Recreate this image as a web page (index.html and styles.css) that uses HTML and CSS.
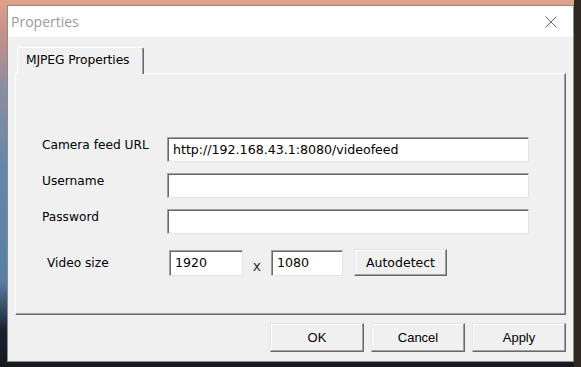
FILE: index.html
```html
<!DOCTYPE html>
<html lang="en">
<head>
    <meta charset="UTF-8">
    <title>Properties</title>
    <link rel="stylesheet" href="styles.css">
</head>
<body>
    <div class="window">
        <div class="titlebar">
            <span class="title">Properties</span>
            <svg class="close" width="12" height="12" viewBox="0 0 12 12">
                <path d="M0.5 0.5 L11.5 11.5 M11.5 0.5 L0.5 11.5" stroke="#6a6a6a" stroke-width="1" fill="none"/>
            </svg>
        </div>
        <div class="content">
            <div class="tabs">
                <div class="tab">MJPEG Properties</div>
            </div>
            <div class="panel">
                <div class="fields">
                    <label>Camera feed URL</label>
                    <div class="edit">http://192.168.43.1:8080/videofeed</div>
                    <label>Username</label>
                    <div class="edit"></div>
                    <label>Password</label>
                    <div class="edit"></div>
                </div>
                <div class="size-row">
                    <label>Video size</label>
                    <div class="edit small w">1920</div>
                    <span class="times">x</span>
                    <div class="edit small h">1080</div>
                    <button class="btn auto">Autodetect</button>
                </div>
            </div>
            <div class="actions">
                <button class="btn">OK</button>
                <button class="btn">Cancel</button>
                <button class="btn">Apply</button>
            </div>
        </div>
    </div>
</body>
</html>
```

FILE: styles.css
```css
*{
    margin: 0;
    padding: 0;
    box-sizing: border-box;
}
body{
    width: 581px;
    height: 367px;
    overflow: hidden;
    padding: 5px 0 0 7px;
    background:
        linear-gradient(to right, transparent 574px, #2e2822 574px),
        linear-gradient(180deg, #e0a28a 0, #c49088 35px, #8a8ea2 90px, #6486aa 170px, #5a80a8 280px, #1c2230 330px, #16181e 367px);
    font-family: "DejaVu Sans", Tahoma, sans-serif;
    font-size: 12px;
    color: #000;
}
.window{
    width: 567px;
    height: 357px;
    border: 1px solid #8c8c8c;
    background: #f0f0f0;
    display: flex;
    flex-direction: column;
}
.titlebar{
    height: 31px;
    background: #fff;
    display: flex;
    align-items: center;
    justify-content: space-between;
    padding: 0 16px 0 3px;
}
.title{
    font-family: "Open Sans", "Noto Sans", sans-serif;
    font-size: 14px;
    color: #9a9a9a;
}
.close{
    display: block;
}
.content{
    flex: 1;
    padding: 10px 7px 0 7px;
    display: flex;
    flex-direction: column;
}
.tabs{
    display: flex;
    padding-left: 2px;
    height: 26px;
}
.tab{
    position: relative;
    z-index: 1;
    height: 27px;
    width: 127px;
    padding: 5px 0 0 8px;
    background: #f0f0f0;
    border-top: 1px solid #fff;
    border-left: 1px solid #fff;
    border-right: 1px solid #696969;
    box-shadow: inset -1px 0 0 #a0a0a0;
    border-radius: 2px 2px 0 0;
    font-size: 12.3px;
    letter-spacing: -0.1px;
}
.panel{
    height: 242px;
    border-top: 1px solid #fff;
    border-left: 1px solid #fff;
    border-right: 1px solid #696969;
    border-bottom: 1px solid #696969;
    box-shadow: inset -1px -1px 0 #a0a0a0;
    padding: 63px 0 0 26px;
}
.fields{
    display: grid;
    grid-template-columns: 125px 362px;
    row-gap: 11px;
}
label{
    padding-top: 1px;
    font-size: 12.2px;
}
.edit{
    height: 25px;
    background: #fff;
    border: 1px solid;
    border-color: #a0a0a0 #e3e3e3 #e3e3e3 #a0a0a0;
    box-shadow: inset 1px 1px 0 #696969;
    padding: 4px 0 0 5px;
    font-size: 12.6px;
    white-space: nowrap;
}
.size-row{
    display: flex;
    align-items: center;
    margin-top: 15px;
}
.size-row label{
    width: 127px;
    padding: 0 0 0 5px;
}
.edit.small{
    height: 26px;
    padding-top: 4px;
}
.edit.w{
    width: 74px;
}
.times{
    width: 28px;
    text-align: center;
    padding-top: 7px;
    font-size: 14px;
    color: #333;
}
.edit.h{
    width: 72px;
}
.btn{
    font-family: "DejaVu Sans", Tahoma, sans-serif;
    font-size: 12.5px;
    color: #000;
    background: #f0f0f0;
    border: 1px solid;
    border-color: #e3e3e3 #696969 #696969 #e3e3e3;
    box-shadow: inset -1px -1px 0 #a0a0a0, inset 1px 1px 0 #fff;
}
.btn.auto{
    width: 93px;
    height: 27px;
    margin-left: 11px;
}
.actions{
    display: flex;
    justify-content: flex-end;
    gap: 7px;
    padding-top: 8px;
}
.actions .btn{
    width: 94px;
    height: 29px;
    font-family: "Liberation Sans Narrow", "Liberation Sans", sans-serif;
    font-size: 13px;
}
```
